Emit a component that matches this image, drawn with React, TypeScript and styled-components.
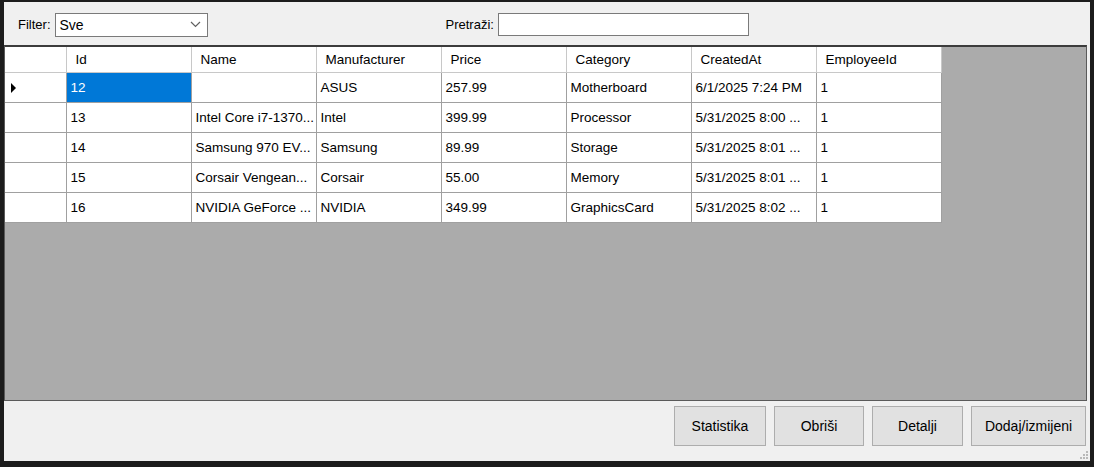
import React from 'react';
import styled, { createGlobalStyle } from 'styled-components';

const GlobalStyle = createGlobalStyle`
  html, body {
    margin: 0;
    padding: 0;
    background: #1c1c1c;
    overflow: hidden;
  }
  * {
    box-sizing: border-box;
  }
`;

const Window = styled.div`
  width: 1094px;
  height: 467px;
  padding: 2px 4px 6px 4px;
  background: #1c1c1c;
  font-family: 'Liberation Sans', Arial, sans-serif;
  font-size: 13.5px;
  color: #000;
`;

const Form = styled.div`
  height: 100%;
  background: #f0f0f0;
  display: flex;
  flex-direction: column;
`;

const Toolbar = styled.div`
  height: 43px;
  display: flex;
  align-items: center;
  padding-left: 14px;
  padding-top: 2px;
`;

const Label = styled.span<{ $gap?: number }>`
  margin-left: ${(p) => p.$gap ?? 0}px;
  margin-right: 4px;
  font-size: 13px;
`;

const Combo = styled.div`
  width: 153px;
  height: 24px;
  background: #fff;
  border: 1px solid #7a7a7a;
  display: flex;
  align-items: center;
  justify-content: space-between;
  padding: 0 6px 0 4px;
  font-size: 14px;
`;

const TextBox = styled.div`
  width: 251px;
  height: 23px;
  background: #fff;
  border: 1px solid #7a7a7a;
`;

const GridArea = styled.div`
  flex: 1;
  margin-right: 3px;
  background: #ababab;
  border: 1px solid #5a5a5a;
  border-top: 2px solid #3c3c3c;
  overflow: hidden;
`;

const Table = styled.table`
  border-collapse: collapse;
  background: #fff;
  table-layout: fixed;
`;

const HeadCell = styled.th<{ $w: number }>`
  width: ${(p) => p.$w}px;
  height: 25px;
  font-weight: normal;
  text-align: left;
  padding: 0 0 0 9px;
  border-right: 1px solid #c8c8c8;
  border-bottom: 1px solid #c8c8c8;
  white-space: nowrap;
  overflow: hidden;
`;

const RowHeader = styled.td`
  width: 61px;
  height: 30px;
  border-right: 1px solid #a0a0a0;
  border-bottom: 1px solid #a0a0a0;
  padding: 0 0 0 6px;
  vertical-align: middle;
`;

const Cell = styled.td<{ $selected?: boolean }>`
  height: 30px;
  padding: 0 0 0 4px;
  border-right: 1px solid #a0a0a0;
  border-bottom: 1px solid #a0a0a0;
  white-space: nowrap;
  overflow: hidden;
  background: ${(p) => (p.$selected ? '#0078d7' : '#fff')};
  color: ${(p) => (p.$selected ? '#fff' : '#000')};
`;

const Arrow = styled.span`
  display: inline-block;
  width: 0;
  height: 0;
  border-top: 5px solid transparent;
  border-bottom: 5px solid transparent;
  border-left: 5px solid #000;
  vertical-align: middle;
`;

const ButtonBar = styled.div`
  height: 60px;
  display: flex;
  justify-content: flex-end;
  align-items: flex-start;
  gap: 8px;
  padding: 5px 4px 0 0;
  position: relative;
`;

const Button = styled.button<{ $w: number }>`
  width: ${(p) => p.$w}px;
  height: 40px;
  background: #e1e1e1;
  border: 1px solid #adadad;
  font-family: 'Liberation Sans', Arial, sans-serif;
  font-size: 14px;
  color: #000;
  padding: 0;
`;

const Grip = styled.svg`
  position: absolute;
  right: 1px;
  bottom: 1px;
`;

const columns = [
  { title: 'Id', w: 125 },
  { title: 'Name', w: 125 },
  { title: 'Manufacturer', w: 125 },
  { title: 'Price', w: 125 },
  { title: 'Category', w: 125 },
  { title: 'CreatedAt', w: 125 },
  { title: 'EmployeeId', w: 125 },
];

const rows = [
  ['12', '', 'ASUS', '257.99', 'Motherboard', '6/1/2025 7:24 PM', '1'],
  ['13', 'Intel Core i7-1370...', 'Intel', '399.99', 'Processor', '5/31/2025 8:00 ...', '1'],
  ['14', 'Samsung 970 EV...', 'Samsung', '89.99', 'Storage', '5/31/2025 8:01 ...', '1'],
  ['15', 'Corsair Vengean...', 'Corsair', '55.00', 'Memory', '5/31/2025 8:01 ...', '1'],
  ['16', 'NVIDIA GeForce ...', 'NVIDIA', '349.99', 'GraphicsCard', '5/31/2025 8:02 ...', '1'],
];

const App: React.FC = () => {
  return (
    <Window>
      <GlobalStyle />
      <Form>
        <Toolbar>
          <Label>Filter:</Label>
          <Combo>
            <span>Sve</span>
            <svg width="11" height="7" viewBox="0 0 11 7">
              <path d="M1 1 L5.5 5.5 L10 1" fill="none" stroke="#606060" strokeWidth="1.2" />
            </svg>
          </Combo>
          <Label $gap={238}>Pretraži:</Label>
          <TextBox />
        </Toolbar>
        <GridArea>
          <Table>
            <thead>
              <tr>
                <HeadCell $w={61} />
                {columns.map((c) => (
                  <HeadCell key={c.title} $w={c.w}>
                    {c.title}
                  </HeadCell>
                ))}
              </tr>
            </thead>
            <tbody>
              {rows.map((r, i) => (
                <tr key={r[0]}>
                  <RowHeader>{i === 0 && <Arrow />}</RowHeader>
                  {r.map((v, j) => (
                    <Cell key={j} $selected={i === 0 && j === 0}>
                      {v}
                    </Cell>
                  ))}
                </tr>
              ))}
            </tbody>
          </Table>
        </GridArea>
        <ButtonBar>
          <Button $w={92}>Statistika</Button>
          <Button $w={90}>Obriši</Button>
          <Button $w={91}>Detalji</Button>
          <Button $w={115}>Dodaj/izmijeni</Button>
          <Grip width="10" height="10" viewBox="0 0 10 10">
            <rect x="7" y="1" width="2" height="2" fill="#b8b8b8" />
            <rect x="4" y="4" width="2" height="2" fill="#b8b8b8" />
            <rect x="7" y="4" width="2" height="2" fill="#b8b8b8" />
            <rect x="1" y="7" width="2" height="2" fill="#b8b8b8" />
            <rect x="4" y="7" width="2" height="2" fill="#b8b8b8" />
            <rect x="7" y="7" width="2" height="2" fill="#b8b8b8" />
          </Grip>
        </ButtonBar>
      </Form>
    </Window>
  );
};

export default App;
